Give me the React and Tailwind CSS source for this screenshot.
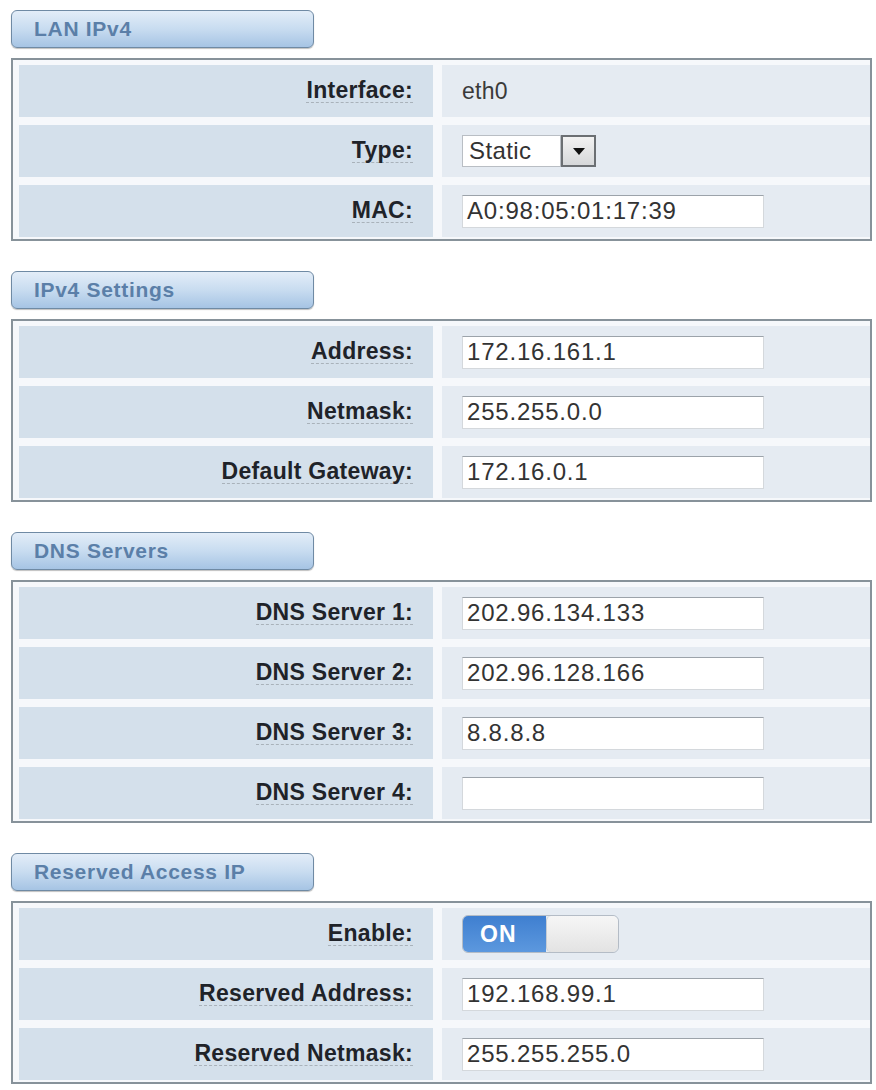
import React from "react";

const sections = [
  {
    title: "LAN IPv4",
    rows: [
      { label: "Interface:", kind: "text", value: "eth0" },
      { label: "Type:", kind: "select", value: "Static" },
      { label: "MAC:", kind: "input", value: "A0:98:05:01:17:39" },
    ],
  },
  {
    title: "IPv4 Settings",
    rows: [
      { label: "Address:", kind: "input", value: "172.16.161.1" },
      { label: "Netmask:", kind: "input", value: "255.255.0.0" },
      { label: "Default Gateway:", kind: "input", value: "172.16.0.1" },
    ],
  },
  {
    title: "DNS Servers",
    rows: [
      { label: "DNS Server 1:", kind: "input", value: "202.96.134.133" },
      { label: "DNS Server 2:", kind: "input", value: "202.96.128.166" },
      { label: "DNS Server 3:", kind: "input", value: "8.8.8.8" },
      { label: "DNS Server 4:", kind: "input", value: "" },
    ],
  },
  {
    title: "Reserved Access IP",
    rows: [
      { label: "Enable:", kind: "switch" },
      { label: "Reserved Address:", kind: "input", value: "192.168.99.1" },
      { label: "Reserved Netmask:", kind: "input", value: "255.255.255.0" },
    ],
  },
];

const Field = ({ row }) => {
  if (row.kind === "text") {
    return <span className="text-[23px] tracking-[0.3px] text-[#3a3a3a]">{row.value}</span>;
  }

  if (row.kind === "select") {
    return (
      <div className="flex h-[32px]">
        <div className="flex w-[99px] items-center border border-[#b9bec4] bg-white pl-[6px] text-[24px] tracking-[0.4px] text-[#333]">
          {row.value}
        </div>
        <div className="flex w-[35px] items-center justify-center border-2 border-[#6b6f73] bg-gradient-to-b from-[#f2f2f2] to-[#d6d8da]">
          <svg width="12" height="7" viewBox="0 0 12 7">
            <path d="M0 0 L12 0 L6 7 Z" fill="#111" />
          </svg>
        </div>
      </div>
    );
  }

  if (row.kind === "switch") {
    return (
      <div className="flex h-[38px] w-[157px] overflow-hidden rounded-[6px] border border-[#b4bcc6]">
        <div className="flex w-[83px] items-center bg-gradient-to-b from-[#3f7fd0] to-[#5c98de] pl-[17px] text-[23px] font-bold tracking-[1px] text-white">
          ON
        </div>
        <div className="flex-1 rounded-[5px] border-l border-[#c6ccd3] bg-gradient-to-b from-[#f6f6f6] to-[#e3e3e3]" />
      </div>
    );
  }

  return (
    <div className="flex h-[33px] w-[302px] items-center border border-[#d4d8dc] border-t-[#9ca3aa] bg-white pl-[4px] text-[24px] tracking-[0.8px] text-[#333]">
      {row.value}
    </div>
  );
};

const Section = ({ title, rows }) => (
  <div className="flex flex-col">
    <div className="flex h-[38px] w-[303px] items-center rounded-[6px] border border-[#6f8aa4] bg-gradient-to-b from-[#e3edf8] via-[#c8dcf0] to-[#a6c4e4] pl-[22px] text-[21px] font-bold tracking-[0.7px] text-[#5b7fa8] shadow-[0_1px_1px_rgba(0,0,0,0.25)]">
      {title}
    </div>
    <div className="mt-[10px] flex flex-col gap-[8px] border-2 border-[#87929a] bg-[#f6f8fb] pt-[5px] pb-[2px] pl-[6px]">
      {rows.map((row) => (
        <div key={row.label} className="grid h-[52px] grid-cols-[414px_1fr] gap-[9px]">
          <div className="flex items-center justify-end bg-[#d4e0eb] pr-[20px]">
            <span className="border-b border-dashed border-[#a9b2ba] text-[23px] leading-[23px] font-bold tracking-[0.3px] text-[#1f2329]">
              {row.label}
            </span>
          </div>
          <div className="flex items-center bg-[#e5ebf2] pl-[20px]">
            <Field row={row} />
          </div>
        </div>
      ))}
    </div>
  </div>
);

export default function App() {
  return (
    <div className="min-h-[1090px] bg-white pt-[10px] pl-[11px] font-['Liberation_Sans',Arial,sans-serif]">
      <div className="flex w-[861px] flex-col gap-[30px]">
        {sections.map((s) => (
          <Section key={s.title} title={s.title} rows={s.rows} />
        ))}
      </div>
    </div>
  );
}
